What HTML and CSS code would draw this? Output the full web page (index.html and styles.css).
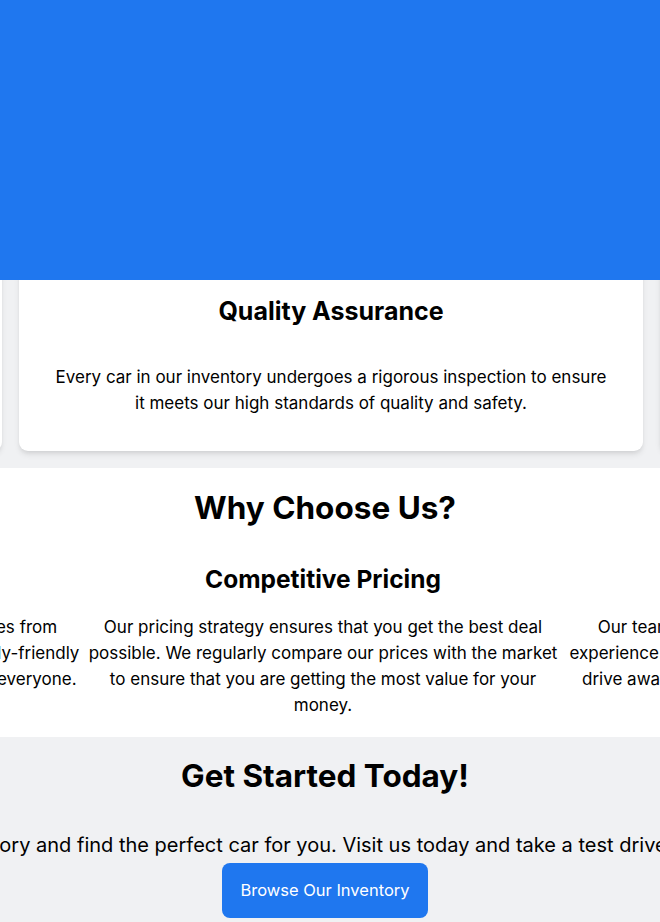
FILE: index.html
```html
<!DOCTYPE html>
<html lang="en">
<head>
<meta charset="utf-8">
<title>Car Dealership</title>
<link rel="stylesheet" href="styles.css">
</head>
<body>
<header class="hero"></header>

<section class="features">
  <div class="card-track">
    <div class="card">
      <h3 class="card-title">Wide Selection</h3>
      <p class="card-text">Choose from hundreds of new and certified pre-owned vehicles from the most trusted brands.</p>
    </div>
    <div class="card">
      <h3 class="card-title">Quality Assurance</h3>
      <p class="card-text">Every car in our inventory undergoes a rigorous inspection to ensure it meets our high standards of quality and safety.</p>
    </div>
    <div class="card">
      <h3 class="card-title">Flexible Financing</h3>
      <p class="card-text">Our finance team works with you to find a payment plan that fits your budget.</p>
    </div>
  </div>
</section>

<section class="why">
  <h2 class="section-title">Why Choose Us?</h2>
  <div class="reasons">
    <div class="reason">
      <h3 class="reason-title">Wide Range of Vehicles</h3>
      <p class="reason-text">We offer a wide selection of great used vehicles from<br>top brands, from sleek sporty coupes to big family-friendly<br>SUVs and trucks, so there is truly something for everyone.</p>
    </div>
    <div class="reason">
      <h3 class="reason-title">Competitive Pricing</h3>
      <p class="reason-text">Our pricing strategy ensures that you get the best deal possible. We regularly compare our prices with the market to ensure that you are getting the most value for your money.</p>
    </div>
    <div class="reason">
      <h3 class="reason-title">Customer Satisfaction</h3>
      <p class="reason-text">Our team is dedicated to providing you with a great<br>experience. We want every customer to feel valued and to<br>drive away happy and confident with their new vehicle.</p>
    </div>
  </div>
</section>

<section class="cta">
  <h2 class="section-title">Get Started Today!</h2>
  <div class="cta-line">
    <p class="cta-text">Explore our inventory and find the perfect car for you. Visit us today and take a test drive with our team!</p>
  </div>
  <a class="btn" href="#">Browse Our Inventory</a>
</section>
</body>
</html>
```

FILE: styles.css
```css
html, body {
  margin: 0;
  padding: 0;
}

body {
  font-family: Inter, "Noto Sans", "Liberation Sans", sans-serif;
  color: #000;
  background: #fff;
  overflow-x: hidden;
}

.hero {
  height: 280px;
  background: #1f77ef;
}

.features {
  background: #f0f1f3;
  height: 188px;
  overflow: hidden;
}

.card-track {
  display: flex;
  justify-content: center;
  gap: 17px;
  margin-left: 2px;
}

.card {
  flex: 0 0 624px;
  box-sizing: border-box;
  margin-top: -17px;
  padding: 32px 32px 35px;
  background: #fff;
  border-radius: 9px;
  box-shadow: 0 4px 6px -1px rgba(0, 0, 0, 0.1), 0 2px 4px -1px rgba(0, 0, 0, 0.06);
  text-align: center;
}

.card-title {
  margin: 0 0 37px;
  font-size: 25px;
  line-height: 32px;
  font-weight: 700;
}

.card-text {
  margin: 0;
  font-size: 17px;
  line-height: 26px;
}

.why {
  padding: 20px 0 19px;
  text-align: center;
  overflow: hidden;
}

.section-title {
  margin: 0 10px 35px 0;
  font-size: 31.5px;
  line-height: 40px;
  font-weight: 700;
}

.reasons {
  display: flex;
  justify-content: center;
  margin-left: -14px;
}

.reason {
  flex: 0 0 480px;
}

.reason-title {
  margin: 0 0 19px;
  font-size: 24.5px;
  line-height: 32px;
  font-weight: 700;
  white-space: nowrap;
}

.reason-text {
  margin: 0;
  font-size: 17px;
  line-height: 26px;
}

.cta {
  background: #f0f1f3;
  padding: 19px 0 20px;
  text-align: center;
  overflow: hidden;
}

.cta-line {
  display: flex;
  justify-content: center;
  margin-left: -24px;
  margin-bottom: 4px;
}

.cta-text {
  flex: none;
  margin: 0;
  font-size: 20px;
  line-height: 28px;
  white-space: nowrap;
}

.btn {
  display: inline-block;
  margin-right: 10px;
  padding: 16px 18px;
  background: #1f77ef;
  color: #fff;
  font-size: 16.5px;
  line-height: 23px;
  border-radius: 8px;
  text-decoration: none;
}
```
